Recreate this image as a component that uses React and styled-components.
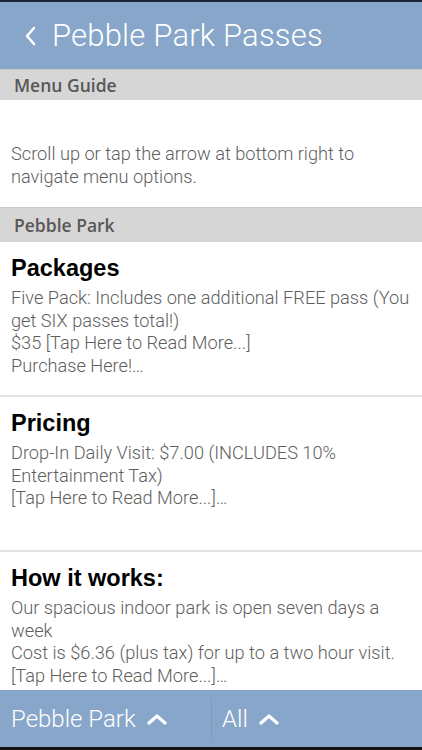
import React from "react";
import styled, { createGlobalStyle } from "styled-components";

const Global = createGlobalStyle`
  html, body { margin: 0; padding: 0; background: #fff; }
  * { box-sizing: border-box; }
`;

const Screen = styled.div`
  width: 422px;
  height: 750px;
  display: flex;
  flex-direction: column;
  overflow: hidden;
  font-family: Roboto, "Liberation Sans", sans-serif;
  border-top: 2px solid #1b2733;
  border-bottom: 3px solid #111;
`;

const Header = styled.div`
  height: 67px;
  flex-shrink: 0;
  background: #87a6c9;
  display: flex;
  align-items: center;
  padding-left: 24px;
  gap: 16px;
  color: #fff;
`;

const Title = styled.h1`
  margin: 0;
  font-size: 31px;
  font-weight: 300;
  letter-spacing: 0.2px;
`;

const Content = styled.div`
  flex: 1;
  overflow: hidden;
`;

const SectionHeader = styled.div`
  height: ${(p) => p.h}px;
  background: #d6d6d6;
  border-top: 1px solid #cbcbcb;
  display: flex;
  align-items: center;
  padding-left: 14px;
  font-family: "Open Sans", sans-serif;
  font-size: 17.5px;
  font-weight: 600;
  color: #585858;
`;

const Guide = styled.div`
  height: 107px;
  padding: 42px 11px 0;
  font-size: 18.2px;
  font-weight: 300;
  line-height: 23px;
  color: #5e5e5e;
`;

const Card = styled.div`
  height: ${(p) => p.h}px;
  padding: 12px 11px 0;
  border-bottom: 2px solid #e2e2e2;
`;

const CardTitle = styled.h2`
  margin: 0 0 5px;
  font-family: "Liberation Sans", Arial, sans-serif;
  font-size: 23.5px;
  font-weight: 700;
  color: #000;
  line-height: 28px;
`;

const CardBody = styled.div`
  font-size: 18.2px;
  font-weight: 300;
  line-height: 22.5px;
  color: #5e5e5e;
`;

const BottomBar = styled.div`
  height: 57px;
  flex-shrink: 0;
  background: #87a6c9;
  display: flex;
  align-items: center;
`;

const Tab = styled.div`
  width: ${(p) => p.w}px;
  height: 100%;
  display: flex;
  align-items: center;
  gap: 11px;
  padding-left: ${(p) => p.pl}px;
  color: #fff;
  font-size: 24px;
  font-weight: 300;
`;

const Divider = styled.div`
  width: 1px;
  height: 44px;
  background: #7d9bbd;
`;

const Back = () => (
  <svg width="12" height="20" viewBox="0 0 12 20">
    <path d="M10 2 L3 10 L10 18" fill="none" stroke="#fff" strokeWidth="2.6" strokeLinecap="round" strokeLinejoin="round" />
  </svg>
);

const Up = () => (
  <svg width="20" height="12" viewBox="0 0 20 12">
    <path d="M2 10 L10 3 L18 10" fill="none" stroke="#fff" strokeWidth="3.2" strokeLinecap="round" strokeLinejoin="round" />
  </svg>
);

const cards = [
  {
    title: "Packages",
    h: 155,
    lines: [
      "Five Pack: Includes one additional FREE pass (You get SIX passes total!)",
      "$35 [Tap Here to Read More...]",
      "Purchase Here!…",
    ],
  },
  {
    title: "Pricing",
    h: 155,
    lines: [
      "Drop-In Daily Visit: $7.00 (INCLUDES 10% Entertainment Tax)",
      "[Tap Here to Read More...]…",
    ],
  },
  {
    title: "How it works:",
    h: 155,
    lines: [
      "Our spacious indoor park is open seven days a week",
      "Cost is $6.36 (plus tax) for up to a two hour visit.",
      "[Tap Here to Read More...]…",
    ],
  },
];

export default function App() {
  return (
    <Screen>
      <Global />
      <Header>
        <Back />
        <Title>Pebble Park Passes</Title>
      </Header>
      <Content>
        <SectionHeader h={31}>Menu Guide</SectionHeader>
        <Guide>
          Scroll up or tap the arrow at bottom right to navigate menu options.
        </Guide>
        <SectionHeader h={35}>Pebble Park</SectionHeader>
        {cards.map((c) => (
          <Card key={c.title} h={c.h}>
            <CardTitle>{c.title}</CardTitle>
            <CardBody>
              {c.lines.map((l) => (
                <div key={l}>{l}</div>
              ))}
            </CardBody>
          </Card>
        ))}
      </Content>
      <BottomBar>
        <Tab w={211} pl={11}>
          Pebble Park <Up />
        </Tab>
        <Divider />
        <Tab w={210} pl={10}>
          All <Up />
        </Tab>
      </BottomBar>
    </Screen>
  );
}
